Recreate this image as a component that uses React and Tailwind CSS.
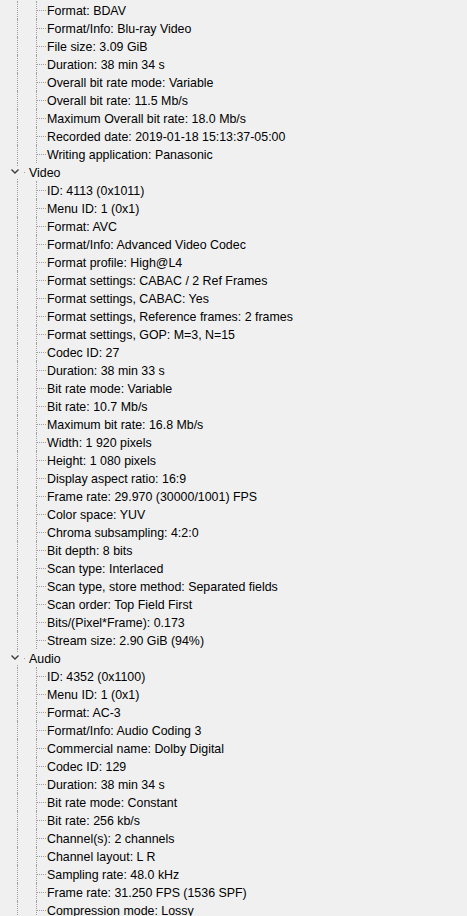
const general = [
  "Format: BDAV",
  "Format/Info: Blu-ray Video",
  "File size: 3.09 GiB",
  "Duration: 38 min 34 s",
  "Overall bit rate mode: Variable",
  "Overall bit rate: 11.5 Mb/s",
  "Maximum Overall bit rate: 18.0 Mb/s",
  "Recorded date: 2019-01-18 15:13:37-05:00",
  "Writing application: Panasonic",
];

const video = [
  "ID: 4113 (0x1011)",
  "Menu ID: 1 (0x1)",
  "Format: AVC",
  "Format/Info: Advanced Video Codec",
  "Format profile: High@L4",
  "Format settings: CABAC / 2 Ref Frames",
  "Format settings, CABAC: Yes",
  "Format settings, Reference frames: 2 frames",
  "Format settings, GOP: M=3, N=15",
  "Codec ID: 27",
  "Duration: 38 min 33 s",
  "Bit rate mode: Variable",
  "Bit rate: 10.7 Mb/s",
  "Maximum bit rate: 16.8 Mb/s",
  "Width: 1 920 pixels",
  "Height: 1 080 pixels",
  "Display aspect ratio: 16:9",
  "Frame rate: 29.970 (30000/1001) FPS",
  "Color space: YUV",
  "Chroma subsampling: 4:2:0",
  "Bit depth: 8 bits",
  "Scan type: Interlaced",
  "Scan type, store method: Separated fields",
  "Scan order: Top Field First",
  "Bits/(Pixel*Frame): 0.173",
  "Stream size: 2.90 GiB (94%)",
];

const audio = [
  "ID: 4352 (0x1100)",
  "Menu ID: 1 (0x1)",
  "Format: AC-3",
  "Format/Info: Audio Coding 3",
  "Commercial name: Dolby Digital",
  "Codec ID: 129",
  "Duration: 38 min 34 s",
  "Bit rate mode: Constant",
  "Bit rate: 256 kb/s",
  "Channel(s): 2 channels",
  "Channel layout: L R",
  "Sampling rate: 48.0 kHz",
  "Frame rate: 31.250 FPS (1536 SPF)",
  "Compression mode: Lossy",
];

function Leaf({ text }) {
  return (
    <div className="flex h-[18px] items-stretch">
      <div className="w-[17px]" />
      <div className="w-[19px] border-l border-dotted border-[#a0a0a0]" />
      <div className="flex w-[11px] items-center border-l border-dotted border-[#a0a0a0]">
        <div className="h-0 w-[9px] border-t border-dotted border-[#a0a0a0]" />
      </div>
      <span className="whitespace-nowrap pt-[1px] leading-[18px]">{text}</span>
    </div>
  );
}

function Branch({ label }) {
  return (
    <div className="flex h-[18px] items-stretch">
      <svg width="28" height="18" viewBox="0 0 28 18" className="shrink-0">
        <line
          x1="17.5"
          y1="0"
          x2="17.5"
          y2="18"
          stroke="#a0a0a0"
          strokeDasharray="1 1"
        />
        <rect x="9" y="3" width="13" height="12" fill="#f0f0f0" />
        <polyline
          points="11.5,6.5 15,10 18.5,6.5"
          fill="none"
          stroke="#3c3c3c"
          strokeWidth="1.4"
        />
        <rect x="24" y="9" width="1" height="1" fill="#a0a0a0" />
      </svg>
      <span className="pl-[1px] pt-[1px] leading-[18px]">{label}</span>
    </div>
  );
}

export default function App() {
  return (
    <div className="min-h-screen overflow-hidden bg-[#f0f0f0] pt-[1px] font-['Liberation_Sans',Arial,sans-serif] text-[12.4px] text-[#000]">
      {general.map((t, i) => (
        <Leaf key={"g" + i} text={t} />
      ))}
      <Branch label="Video" />
      {video.map((t, i) => (
        <Leaf key={"v" + i} text={t} />
      ))}
      <Branch label="Audio" />
      {audio.map((t, i) => (
        <Leaf key={"a" + i} text={t} />
      ))}
    </div>
  );
}
